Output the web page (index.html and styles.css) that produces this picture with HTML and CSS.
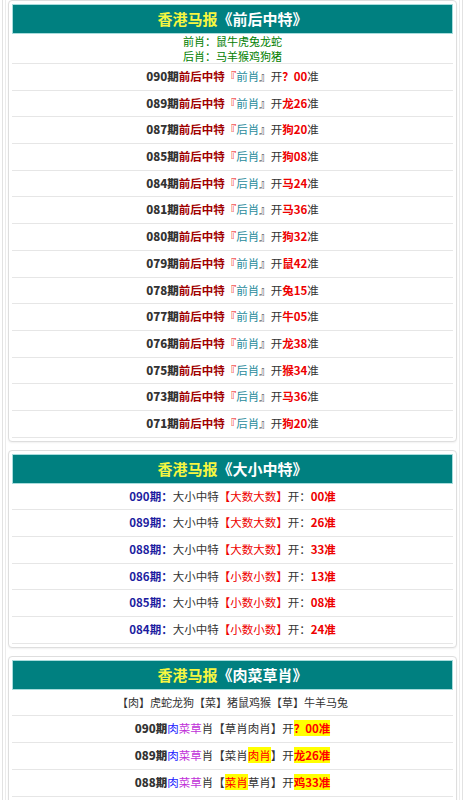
FILE: index.html
```html
<!DOCTYPE html>
<html lang="zh-CN">
<head>
    <meta charset="UTF-8">
    <meta name="viewport" content="width=device-width, initial-scale=1.0">
    <title>香港马报</title>
    <link rel="stylesheet" href="styles.css">
</head>
<body>
<div class="outer">
<div class="inner">

    <!-- 前后中特 -->
    <div class="card">
        <div class="card-head"><span class="site">香港马报</span>《前后中特》</div>
        <div class="sub">
            <div>前肖：鼠牛虎兔龙蛇</div>
            <div>后肖：马羊猴鸡狗猪</div>
        </div>
        <div id="qhList"></div>
    </div>

    <!-- 大小中特 -->
    <div class="card">
        <div class="card-head"><span class="site">香港马报</span>《大小中特》</div>
        <div id="dxList"></div>
    </div>

    <!-- 肉菜草肖 -->
    <div class="card">
        <div class="card-head"><span class="site">香港马报</span>《肉菜草肖》</div>
        <div class="row plain">【肉】虎蛇龙狗【菜】猪鼠鸡猴【草】牛羊马兔</div>
        <div class="row"><b>090期</b><span class="c-blue">肉</span><span class="c-purple">菜草</span><span class="n">肖【草肖肉肖】开</span><span class="hl">？00准</span></div>
        <div class="row"><b>089期</b><span class="c-blue">肉</span><span class="c-purple">菜草</span><span class="n">肖【菜肖</span><span class="hl n">肉肖</span><span class="n">】开</span><span class="hl">龙26准</span></div>
        <div class="row"><b>088期</b><span class="c-blue">肉</span><span class="c-purple">菜草</span><span class="n">肖【</span><span class="hl n">菜肖</span><span class="n">草肖】开</span><span class="hl">鸡33准</span></div>
        <div class="row"></div>
    </div>

</div>
</div>

<script>
    // 前后中特 records: period, pick, result
    const qhData = [
        ['090', '前肖', '？', '00'],
        ['089', '前肖', '龙', '26'],
        ['087', '后肖', '狗', '20'],
        ['085', '后肖', '狗', '08'],
        ['084', '后肖', '马', '24'],
        ['081', '后肖', '马', '36'],
        ['080', '后肖', '狗', '32'],
        ['079', '前肖', '鼠', '42'],
        ['078', '前肖', '兔', '15'],
        ['077', '前肖', '牛', '05'],
        ['076', '前肖', '龙', '38'],
        ['075', '后肖', '猴', '34'],
        ['073', '后肖', '马', '36'],
        ['071', '后肖', '狗', '20']
    ];

    // 大小中特 records
    const dxData = [
        ['090', '大数大数', '00'],
        ['089', '大数大数', '26'],
        ['088', '大数大数', '33'],
        ['086', '小数小数', '13'],
        ['085', '小数小数', '08'],
        ['084', '小数小数', '24']
    ];

    const qhList = document.getElementById('qhList');
    qhData.forEach(item => {
        const row = document.createElement('div');
        row.className = 'row';
        row.innerHTML = `<b>${item[0]}期</b><span class="c-maroon">前后中特</span><span class="n"><span class="c-red">『</span><span class="c-teal">${item[1]}</span>』开</span><span class="c-red">${item[2]}${item[3]}</span><span class="n">准</span>`;
        qhList.appendChild(row);
    });

    const dxList = document.getElementById('dxList');
    dxData.forEach(item => {
        const row = document.createElement('div');
        row.className = 'row dx';
        row.innerHTML = `<b class="c-navy">${item[0]}期：</b>大小中特<span class="c-red n">【${item[1]}】</span>开：<span class="c-red">${item[2]}准</span>`;
        dxList.appendChild(row);
    });
</script>
</body>
</html>
```

FILE: styles.css
```css
body {
    margin: 0;
    background: #fff;
    font-family: "Noto Sans CJK SC", "Noto Sans", sans-serif;
    font-size: 11.5px;
    color: #333;
}

.outer {
    margin: 0 2px;
    padding: 0 2px;
    border-left: 1px solid #e2e2e2;
    border-right: 1px solid #e2e2e2;
}

.inner {
    padding: 0 2px;
    border-left: 1px solid #ececec;
    border-right: 1px solid #ececec;
}

.card {
    background: #fff;
    border: 1px solid #dedede;
    border-radius: 4px;
    padding: 3px;
    margin-bottom: 8px;
    box-shadow: 0 1px 2px rgba(0, 0, 0, 0.06);
}

.card-head {
    height: 28px;
    line-height: 28px;
    background: #008080;
    border: 1px solid #a8dcdc;
    text-align: center;
    color: #fff;
    font-size: 15px;
    font-weight: bold;
}

.card-head .site {
    color: #f6f640;
}

.sub {
    text-align: center;
    font-size: 11px;
    color: #008000;
    border-bottom: 1px solid #e6e6e6;
}

.sub div {
    height: 14.5px;
    line-height: 14.5px;
}

.row {
    height: 25.7px;
    line-height: 25.7px;
    text-align: center;
    font-weight: bold;
    border-bottom: 1px solid #e6e6e6;
    white-space: nowrap;
}

.row.plain {
    font-size: 11px;
}

.row.plain,
.row.dx {
    font-weight: normal;
}

.row.dx b,
.row.dx .c-red:last-child {
    font-weight: bold;
}

.n {
    font-weight: normal;
}

.c-maroon {
    color: #a00000;
}

.c-red {
    color: #ee0000;
}

.c-teal {
    color: #2a8c9c;
}

.c-navy {
    color: #1c1ca0;
}

.c-blue {
    color: #1a1aff;
    font-weight: normal;
}

.c-purple {
    color: #c030d8;
    font-weight: normal;
}

.hl {
    background: #ffff00;
    color: #ff0000;
}
```
